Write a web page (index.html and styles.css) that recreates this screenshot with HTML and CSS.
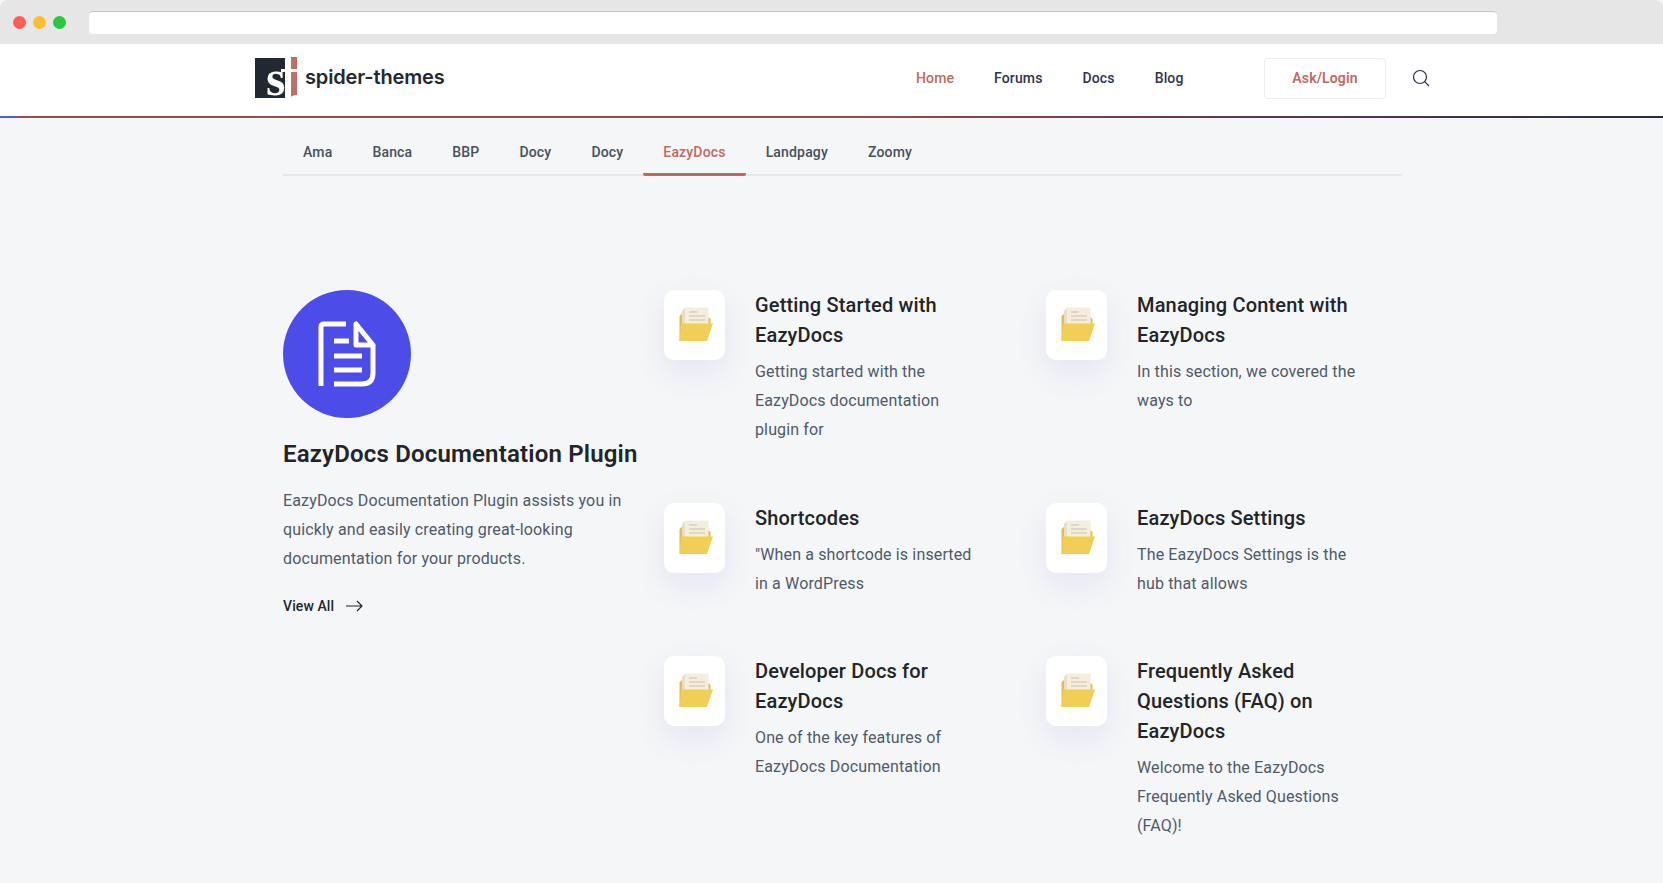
FILE: index.html
```html
<!DOCTYPE html>
<html lang="en">
<head>
<meta charset="utf-8">
<title>EazyDocs</title>
<link rel="stylesheet" href="styles.css">
</head>
<body>
<svg class="defs" width="0" height="0" aria-hidden="true">
  <symbol id="folder" viewBox="0 0 36 36">
    <path d="M2.500 9 L6 6 L6 34 L2.500 34Z" fill="#e3bf4a"/>
    <path d="M5 4 L8 1 L12 1 L12 24 L5 24Z" fill="#e6dfc8"/>
    <path d="M8 0.500 L31.500 0.500 L31.500 24 L8 24Z" fill="#f3eedd"/>
    <path d="M12 5 H20 M12 9 H28 M12 13 H28" stroke="#d8d2bd" stroke-width="1.300" fill="none"/>
    <path d="M31.500 10 L33.500 12 L33.500 18 L31.500 18Z" fill="#e3bf4a"/>
    <path d="M4 16.500 L36 16.500 L30 34 L2.500 34Z" fill="#f1ce55"/>
  </symbol>
</svg>

<div class="chrome">
  <div class="dots"><span class="dot dot-red"></span><span class="dot dot-amber"></span><span class="dot dot-green"></span></div>
  <div class="urlbar"></div>
</div>

<header class="header">
  <a class="logo" href="#">
    <span class="logo-mark">
      <span class="logo-s">s</span>
      <svg class="logo-stem" width="16" height="43" viewBox="0 0 16 43" aria-hidden="true">
        <rect x="4" y="0" width="6" height="43" fill="#fff"/>
        <rect x="10" y="0" width="6" height="41" fill="#bf6f66"/>
        <rect x="0" y="12" width="16" height="3" fill="#fff"/>
        <path d="M4 41 H16 V38 Q10 38 7 43Z" fill="#fff"/>
      </svg>
    </span>
    <span class="logo-text">spider-themes</span>
  </a>
  <nav class="nav">
    <a class="nav-link is-active" href="#">Home</a>
    <a class="nav-link" href="#">Forums</a>
    <a class="nav-link" href="#">Docs</a>
    <a class="nav-link" href="#">Blog</a>
  </nav>
  <a class="login" href="#">Ask/Login</a>
  <svg class="search" width="18" height="18" viewBox="0 0 18 18" aria-hidden="true">
    <circle cx="8" cy="8" r="6.500" fill="none" stroke="#2a2f45" stroke-width="1.200"/>
    <path d="M12.700 12.700 L17 17" stroke="#2a2f45" stroke-width="1.200"/>
  </svg>
</header>
<div class="rule"></div>

<main class="main">
  <div class="tabs">
    <a class="tab" href="#">Ama</a>
    <a class="tab" href="#">Banca</a>
    <a class="tab" href="#">BBP</a>
    <a class="tab" href="#">Docy</a>
    <a class="tab" href="#">Docy</a>
    <a class="tab is-active" href="#">EazyDocs</a>
    <a class="tab" href="#">Landpagy</a>
    <a class="tab" href="#">Zoomy</a>
  </div>

  <section class="content">
    <aside class="intro">
      <div class="intro-icon">
        <svg width="58" height="66" viewBox="0 0 58 66" aria-hidden="true" fill="none" stroke="#fff" stroke-width="5">
          <path d="M3 65 V6 Q3 3 6 3 H28"/>
          <path d="M38 3 V24 H55 Z" stroke-linejoin="round"/>
          <path d="M55 24 V52 Q55 63 44 63 H16"/>
          <path d="M16 20 H31 M16 35 H44 M16 49 H44"/>
        </svg>
      </div>
      <h2 class="intro-title">EazyDocs Documentation Plugin</h2>
      <p class="intro-text">EazyDocs Documentation Plugin assists you in quickly and easily creating great-looking documentation for your products.</p>
      <a class="view-all" href="#">View All
        <svg width="17" height="12" viewBox="0 0 17 12" aria-hidden="true" fill="none" stroke="#22262b" stroke-width="1.200"><path d="M0 6 H16 M11 1 L16 6 L11 11"/></svg>
      </a>
    </aside>

    <div class="items">
      <article class="item">
        <div class="item-icon"><svg width="36" height="36"><use href="#folder"/></svg></div>
        <div class="item-body">
          <h3 class="item-title">Getting Started with EazyDocs</h3>
          <p class="item-text">Getting started with the EazyDocs documentation plugin for</p>
        </div>
      </article>
      <article class="item">
        <div class="item-icon"><svg width="36" height="36"><use href="#folder"/></svg></div>
        <div class="item-body">
          <h3 class="item-title">Managing Content with EazyDocs</h3>
          <p class="item-text">In this section, we covered the ways to</p>
        </div>
      </article>
      <article class="item">
        <div class="item-icon"><svg width="36" height="36"><use href="#folder"/></svg></div>
        <div class="item-body">
          <h3 class="item-title">Shortcodes</h3>
          <p class="item-text">"When a shortcode is inserted in a WordPress</p>
        </div>
      </article>
      <article class="item">
        <div class="item-icon"><svg width="36" height="36"><use href="#folder"/></svg></div>
        <div class="item-body">
          <h3 class="item-title">EazyDocs Settings</h3>
          <p class="item-text">The EazyDocs Settings is the hub that allows</p>
        </div>
      </article>
      <article class="item">
        <div class="item-icon"><svg width="36" height="36"><use href="#folder"/></svg></div>
        <div class="item-body">
          <h3 class="item-title">Developer Docs for EazyDocs</h3>
          <p class="item-text">One of the key features of EazyDocs Documentation</p>
        </div>
      </article>
      <article class="item">
        <div class="item-icon"><svg width="36" height="36"><use href="#folder"/></svg></div>
        <div class="item-body">
          <h3 class="item-title">Frequently Asked Questions (FAQ) on EazyDocs</h3>
          <p class="item-text">Welcome to the EazyDocs Frequently Asked Questions (FAQ)!</p>
        </div>
      </article>
    </div>
  </section>
</main>
</body>
</html>
```
FILE: styles.css
```css
* { box-sizing: border-box; }
html, body { margin: 0; height: 883px; overflow: hidden; }
body { background: #f5f6f7; font-family: Roboto, "Liberation Sans", sans-serif; color: #22262b; }
a { text-decoration: none; color: inherit; }
h2, h3, p { margin: 0; }
.defs { position: absolute; }

.chrome { height: 44px; background: #e6e6e6; display: flex; align-items: center; padding-left: 13px; border-radius: 8px 8px 0 0; }
.dots { display: flex; gap: 7px; width: 76px; }
.dot { width: 13px; height: 13px; border-radius: 50%; }
.dot-red { background: #ff5f57; }
.dot-amber { background: #febc2e; }
.dot-green { background: #28c840; }
.urlbar { width: 1408px; height: 23px; background: #fff; border-radius: 4px; border-top: 1px solid #c4c4c4; }

.header { height: 72px; background: #fff; display: flex; align-items: center; padding-left: 255px; padding-bottom: 4px; }
.logo { display: flex; align-items: center; gap: 8px; width: 661px; }
.logo-mark { flex: none; position: relative; width: 42px; height: 43px; display: block; background: linear-gradient(#222831, #222831) 0 1px / 34px 40px no-repeat; }
.logo-s { position: absolute; left: 11px; bottom: 1px; font-family: "Liberation Serif", serif; font-weight: 700; font-size: 50px; line-height: 42px; color: #fff; }
.logo-stem { position: absolute; left: 26px; top: 0; }
.logo-text { font-family: Inter, sans-serif; font-size: 20px; font-weight: 600; color: #222831; letter-spacing: -0.150px; padding-bottom: 3px; }
.nav { display: flex; gap: 40px; width: 348px; }
.nav-link { font-size: 14px; font-weight: 500; letter-spacing: 0.130px; color: #2f3450; }
.nav-link.is-active { color: #bd6a62; }
.login { width: 122px; height: 41px; border: 1px solid #ececec; border-radius: 4px; display: flex; align-items: center; justify-content: center; font-size: 14px; font-weight: 600; letter-spacing: 0.130px; color: #bd6a62; }
.search { margin-left: 26px; }
.rule { height: 2px; background: linear-gradient(90deg, #4a64c8 0, #4a64c8 16px, #964f50 17px, #964f50 50%, #5a3a4c 75%, #2b2a45 100%); }

.main { width: 1119px; margin-left: 283px; }
.tabs { display: flex; height: 58px; border-bottom: 2px solid #e4e8e8; padding-top: 25px; }
.tab { padding: 0 20px; height: 33px; font-size: 14px; font-weight: 500; letter-spacing: 0.170px; line-height: 19px; color: #46505f; }
.tab.is-active { color: #bd6a62; border-bottom: 3px solid #bd6a62; margin-bottom: -2px; border-radius: 2px; }

.content { display: grid; grid-template-columns: 381px 1fr; margin-top: 114px; }
.intro-icon { width: 128px; height: 128px; border-radius: 50%; background: #4c4de8; display: flex; align-items: center; justify-content: center; }
.intro-title { font-size: 24px; line-height: 36px; font-weight: 600; letter-spacing: 0.180px; margin-top: 18px; white-space: nowrap; color: #212529; }
.intro-text { font-size: 16px; line-height: 29px; letter-spacing: 0.145px; color: #4e5a6b; margin-top: 14px; width: 350px; }
.view-all { display: inline-flex; align-items: center; gap: 12px; margin-top: 25px; font-size: 14px; font-weight: 500; letter-spacing: 0.100px; }

.items { display: grid; grid-template-columns: 382px 1fr; grid-template-rows: 213px 153px auto; }
.item { display: flex; gap: 30px; }
.item-icon { flex: none; width: 61px; height: 70px; background: #fff; border-radius: 10px; box-shadow: 0 12px 30px rgba(90, 90, 220, 0.100); display: flex; align-items: center; justify-content: center; }
.item-body { width: 226px; }
.item-title { font-size: 20px; line-height: 30px; font-weight: 500; letter-spacing: 0.160px; color: #222528; margin-bottom: 7px; }
.item-text { font-size: 16px; line-height: 29px; letter-spacing: 0.140px; color: #4e5a6b; }
```
